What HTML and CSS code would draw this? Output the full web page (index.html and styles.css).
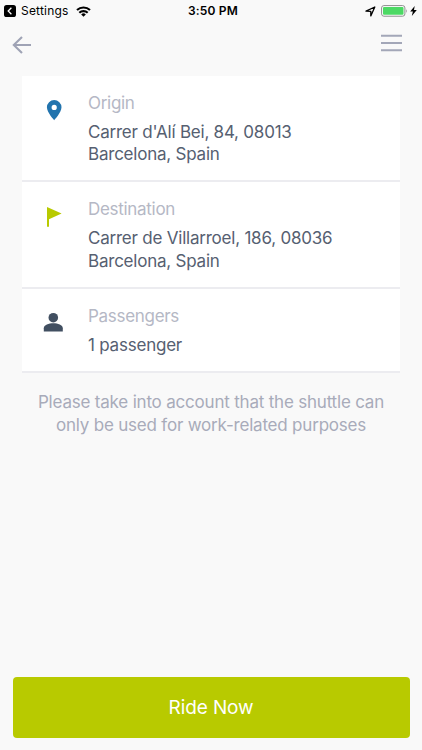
FILE: index.html
```
<!DOCTYPE html>
<html lang="en">
<head>
<meta charset="utf-8">
<title>Ride</title>
<link rel="stylesheet" href="styles.css">
</head>
<body>
<div class="screen">
  <header class="status">
    <div class="status-left">
      <svg class="back-app" viewBox="0 0 12 12"><rect width="12" height="12" rx="2.6" fill="#000"/><path d="M7.4 2.8 4.2 6l3.2 3.2" fill="none" stroke="#fff" stroke-width="1.3"/></svg>
      <span class="settings">Settings</span>
      <svg class="wifi" viewBox="0 0 15 11"><g fill="none" stroke="#000" stroke-width="2.1"><path d="M1 4.1a9.4 9.4 0 0 1 13 0"/><path d="M3.3 6.8a6.1 6.1 0 0 1 8.4 0"/></g><path d="M5.2 8.4a3.4 3.4 0 0 1 4.6 0L7.5 10.7z"/></svg>
    </div>
    <span class="time">3:50 PM</span>
    <div class="status-right">
      <svg class="location" viewBox="0 0 11 11"><path d="M1 5.2 9.8 1 5.8 9.9V5.3z" fill="none" stroke="#000" stroke-width="1.3" stroke-linejoin="round"/></svg>
      <svg class="battery" viewBox="0 0 27 12"><rect x=".6" y=".6" width="23.3" height="10.6" rx="2.3" fill="#fff" stroke="#8c8c8c"/><rect x="2" y="2" width="20.5" height="7.8" rx="1" fill="#4cd964"/><path d="M25 4q1.6 2 0 4z" fill="#8c8c8c"/></svg>
      <svg class="bolt" viewBox="0 0 7 10"><path d="M4.7 0 .2 5.6h2.7L1.8 10 6.8 4H4z"/></svg>
    </div>
  </header>
  <nav class="nav">
    <svg class="arrow" viewBox="0 0 20 18"><path d="M10 .9 1.8 9l8.2 8.1M2 9h17" fill="none" stroke="#9fa3b5" stroke-width="2.1"/></svg>
    <svg class="menu" viewBox="0 0 21 18"><path d="M0 1.7h21M0 9h21M0 16.2h21" stroke="#a3a7b8" stroke-width="2"/></svg>
  </nav>
  <main class="cards">
    <section class="card">
      <svg class="icon" viewBox="0 0 22 22"><path fill="#2274ae" fill-rule="evenodd" d="M11.2 1a7.3 7.3 0 0 0-7.3 7.3c0 5.2 7.3 12.9 7.3 12.9s7.3-7.7 7.3-12.9A7.3 7.3 0 0 0 11.2 1zm0 4.8a2.6 2.6 0 1 1 0 5.2 2.6 2.6 0 0 1 0-5.2z"/></svg>
      <div><h2 class="label">Origin</h2><p class="value">Carrer d'Alí Bei, 84, 08013<br>Barcelona, Spain</p></div>
    </section>
    <section class="card">
      <svg class="icon" viewBox="0 0 22 22"><path fill="#b8ca00" d="M4 2l14.6 6.4L6 14.2v7.6H4z"/></svg>
      <div><h2 class="label">Destination</h2><p class="value">Carrer de Villarroel, 186, 08036<br>Barcelona, Spain</p></div>
    </section>
    <section class="card">
      <svg class="icon" viewBox="0 0 22 22"><g fill="#414f61"><circle cx="10.3" cy="5.7" r="4.8"/><path d="M.8 19.6v-3.4c0-3.2 5-4.9 9.5-4.9s9.5 1.7 9.5 4.9v3.4z"/></g></svg>
      <div><h2 class="label">Passengers</h2><p class="value">1 passenger</p></div>
    </section>
  </main>
  <p class="notice">Please take into account that the shuttle can<br>only be used for work-related purposes</p>
  <button class="ride">Ride Now</button>
</div>
</body>
</html>
```
FILE: styles.css
```
* { box-sizing: border-box; margin: 0; }
body { background: #f9f9f9; font-family: Inter, "Liberation Sans", sans-serif; }
svg { display: block; flex: none; }
.screen { width: 422px; height: 750px; display: flex; flex-direction: column; overflow: hidden; }
.status { height: 22px; display: grid; grid-template-columns: 1fr auto 1fr; align-items: center; padding: 0 5px 0 4px; color: #000; }
.status-left, .status-right { display: flex; align-items: center; }
.status-right { justify-content: flex-end; }
.back-app { width: 12px; height: 12px; }
.settings { margin-left: 5px; font-size: 12px; line-height: 22px; letter-spacing: .2px; }
.wifi { width: 15px; height: 11px; margin-left: 7px; }
.time { padding-left: 5px; font-size: 12px; line-height: 22px; font-weight: 600; letter-spacing: .2px; }
.location { width: 11px; height: 11px; margin-right: 5px; }
.battery { width: 27px; height: 12px; margin-right: 2px; }
.bolt { width: 7px; height: 10px; }
.nav { height: 54px; display: flex; justify-content: space-between; padding: 12px 20px 0 12px; }
.arrow { width: 20px; height: 18px; margin-top: 2px; }
.menu { width: 21px; height: 18px; }
.cards { margin: 0 22px; }
.card { display: flex; background: #fff; border-bottom: 2px solid #ececf0; padding: 15px 0 16px 21px; height: 106px; }
.card + .card { height: 107px; }
.card:last-child { height: 84px; }
.icon { width: 22px; height: 22px; margin: 8px 23px 0 0; }
.label { font-size: 17px; line-height: 24px; font-weight: 400; letter-spacing: -.3px; color: #b5b8c5; }
.value { margin-top: 6px; font-size: 17px; line-height: 22px; letter-spacing: -.22px; color: #566071; }
.card + .card .value { line-height: 22.5px; }
.notice { margin-top: 18px; text-align: center; font-size: 17px; line-height: 22.5px; letter-spacing: -.2px; color: #a8abba; }
.ride { margin: auto 12.5px 12.5px; height: 61px; flex: none; border: 0; border-radius: 4px; background: #b8ca00; color: #fff; font: 400 19px Inter, "Liberation Sans", sans-serif; letter-spacing: -.1px; }
```
